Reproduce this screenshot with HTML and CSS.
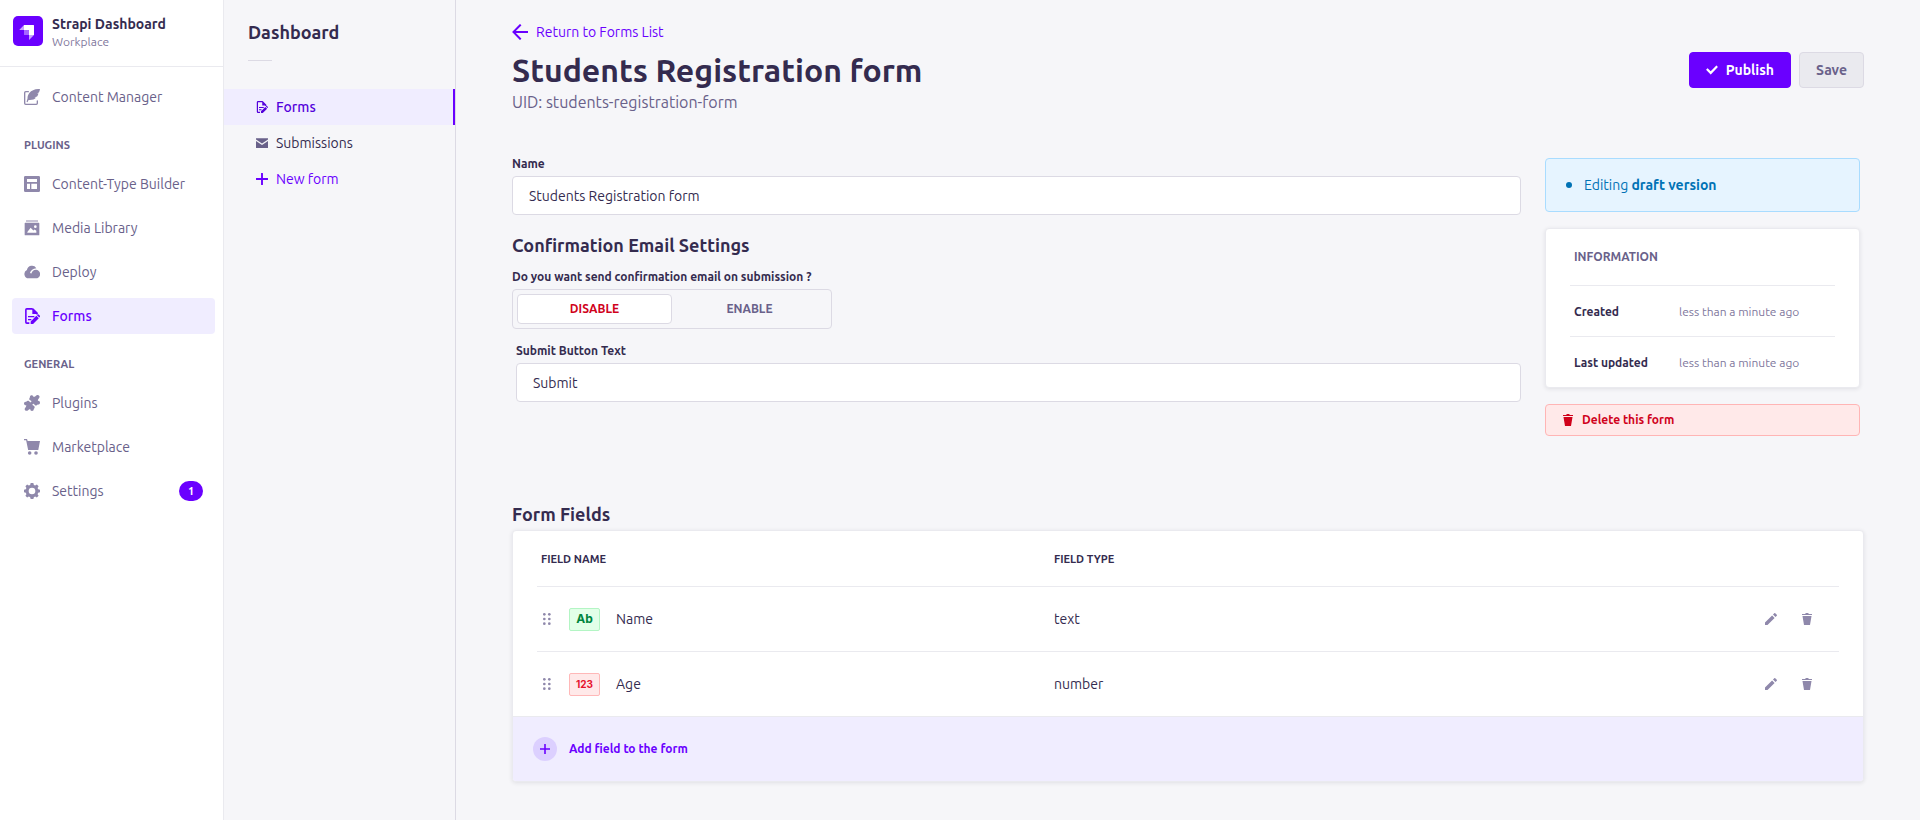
FILE: index.html
```html
<!DOCTYPE html>
<html lang="en">
<head>
<meta charset="utf-8">
<title>Students Registration form</title>
<link rel="stylesheet" href="styles.css">
</head>
<body>
<svg class="sprite" aria-hidden="true">
  <symbol id="trash" viewBox="0 0 24 24"><path d="M3.236 6.149a.2.2 0 00-.197.233L6 24h12l2.96-17.618a.2.2 0 00-.196-.233H3.236zM21.8 1.983c.11 0 .2.09.2.2v1.584a.2.2 0 01-.2.2H2.2a.2.2 0 01-.2-.2V2.183c0-.11.09-.2.2-.2h5.511c.9 0 1.631-1.09 1.631-1.983h5.316c0 .894.73 1.983 1.631 1.983H21.8z"/></symbol>
  <symbol id="pencil" viewBox="0 0 24 24"><path d="M23.604 3.514c.528.528.528 1.36 0 1.887l-2.622 2.607-4.99-4.99L18.6.396a1.322 1.322 0 011.887 0l3.118 3.118zM0 24v-4.99l14.2-14.2 4.99 4.99L4.99 24H0z"/></symbol>
  <symbol id="plus" viewBox="0 0 24 24"><path d="M24 13.604a.3.3 0 01-.3.3h-9.795V23.7a.3.3 0 01-.3.3h-3.21a.3.3 0 01-.3-.3v-9.795H.3a.3.3 0 01-.3-.3v-3.21a.3.3 0 01.3-.3h9.795V.3a.3.3 0 01.3-.3h3.21a.3.3 0 01.3.3v9.795H23.7a.3.3 0 01.3.3v3.21z"/></symbol>
  <symbol id="check" viewBox="0 0 24 24"><path d="M20.727 2.97a.2.2 0 01.286 0l2.85 2.89a.2.2 0 010 .28L9.554 20.854a.2.2 0 01-.285 0l-9.13-9.243a.2.2 0 010-.281l2.85-2.892a.2.2 0 01.284 0l6.14 6.209L20.726 2.97z"/></symbol>
  <symbol id="arrow-left" viewBox="0 0 24 24"><path d="M24 13.3a.2.2 0 01-.2.2H5.74l8.239 8.239a.2.2 0 010 .282L12.14 23.86a.2.2 0 01-.282 0L.14 12.14a.2.2 0 010-.282L11.86.14a.2.2 0 01.282 0L13.98 1.98a.2.2 0 010 .282L5.74 10.5H23.8c.11 0 .2.09.2.2v2.6z"/></symbol>
  <symbol id="form" viewBox="0 0 24 24">
    <path fill="none" stroke="currentColor" stroke-width="2.4" d="M13 1.300H4.200a1.400 1.400 0 00-1.400 1.400v18.600a1.400 1.400 0 001.400 1.400H8M13 1.300l6.500 6.500v2"/>
    <path d="M12.500 1v8h8L12.500 1zM6 12h9.500v2H6zM6 16.500h5v2H6zM10 24v-3.600l8.600-8.600 3.600 3.600L13.600 24zM19.500 10.900l1.100-1.100a.9.900 0 011.300 0l2 2a.9.900 0 010 1.300l-1 1.100z"/>
  </symbol>
  <symbol id="mail" viewBox="0 0 24 24"><path d="M0 2.500h24v2.600L12 13.200 0 5.100zM0 8l12 8.200L24 8v14H0z"/></symbol>
  <symbol id="drag" viewBox="0 0 24 36"><circle cx="4" cy="4" r="4"/><circle cx="19" cy="4" r="4"/><circle cx="4" cy="18" r="4"/><circle cx="19" cy="18" r="4"/><circle cx="4" cy="32" r="4"/><circle cx="19" cy="32" r="4"/></symbol>
</svg>

<div class="app">
  <nav class="sidebar" aria-label="Main">
    <div class="brand">
      <svg class="logo" viewBox="0 0 30 30"><rect width="30" height="30" rx="5" fill="#6a00ff"/><path fill="#fff" d="M11 9h9.500a.5.500 0 01.5.5V19h-5v-4.500a.5.500 0 00-.5-.5H11z"/><path fill="#a566ff" d="M11 14h4.500a.5.500 0 01.5.5V19h-4.500a.5.500 0 01-.5-.5z"/><path fill="#c9a3ff" d="M11 9v5H6.200zM16 19h5l-5 5z"/></svg>
      <div><div class="brand-name">Strapi Dashboard</div><div class="brand-sub">Workplace</div></div>
    </div>
    <div class="nav">
      <a class="nav-item" href="#"><svg class="i16" viewBox="0 0 24 24"><path fill="none" stroke="currentColor" stroke-width="2" stroke-linecap="round" d="M6.500 4H2.600A1.600 1.600 0 001 5.600v15.800A1.600 1.600 0 002.600 23h15.800a1.600 1.600 0 001.600-1.600V18"/><path d="M24 0c-7-.3-12.500 1.700-16 6-2 2.600-2.900 5.500-2.700 8.300l-1.500 4.900 1.500.6 1.500-3.300c4.800.4 8.700-.6 11.200-3.200l-2.300-.9 4-1.100c.9-1.300 1.600-2.800 2-4.400l-2.200-.5 2.900-1.300C23.200 3.600 23.700 1.800 24 0z"/></svg>Content Manager</a>
      <h2 class="nav-title">Plugins</h2>
      <a class="nav-item" href="#"><svg class="i16" viewBox="0 0 24 24"><path fill-rule="evenodd" d="M2 0h20a2 2 0 012 2v20a2 2 0 01-2 2H2a2 2 0 01-2-2V2a2 2 0 012-2zM4.500 4.500V9h15V4.500zM4.500 11.500v8H9v-8zM11 11.500v8h8.500v-8z"/></svg>Content-Type Builder</a>
      <a class="nav-item" href="#"><svg class="i16" viewBox="0 0 24 24"><path opacity=".5" d="M3.500 0h17a.5.500 0 01.5.5V3H3V.500a.5.500 0 01.5-.5z"/><path fill-rule="evenodd" d="M2 4h20a1 1 0 011 1v17a1 1 0 01-1 1H2a1 1 0 01-1-1V5a1 1 0 011-1zm3 15h13.500v-3l-2.500-1.800-2 1.500-4-4L5 18zM17 8a2 2 0 100 4 2 2 0 000-4z"/></svg>Media Library</a>
      <a class="nav-item" href="#"><svg class="i16" viewBox="0 0 24 24"><path d="M7 21.500a6.500 6.500 0 01-2.600-12.400A7.700 7.700 0 0118.500 6.200c-5 .1-8.600 3-9.600 7.400l2.200.5c.9-3.600 4-5.800 7.400-5.400a6.400 6.400 0 01-1.500 12.800z"/></svg>Deploy</a>
      <a class="nav-item active" href="#"><svg class="i16"><use href="#form"/></svg>Forms</a>
      <h2 class="nav-title">General</h2>
      <a class="nav-item" href="#"><svg class="i16" viewBox="0 0 24 24"><path d="M9 3.500c-.5-2 .8-3.300 2.500-3.300 1.800 0 2.500 1.300 2.700 2.600C16 3 17 1.500 18.500.600c1.500-.9 3.500-.6 4.500.8.700 1.300.3 2.500-.5 3.600-.9 1-1.600 1.800-1.700 3.800 1.500-.3 3.200.8 3.200 2.700 0 2-1.700 3.200-3.500 2.600-.8 1.500-2.700 2-4 1.200-1.100-.7-1.200-2-2.500-2.200-1.300 0-1.600 1.400-.8 2.300.8.800 2.300.7 2.700 2.200.4 1.300-.3 2.600-1.300 3.300.3 1.600-.8 3.100-2.600 3.100s-2.800-1.400-2.600-3c-1.600 0-2.300 1.600-3.700 2.400-1.400.7-3.400.5-4.300-.9-.8-1.300-.3-2.600.5-3.500.9-1 1.500-1.700 1.500-3.700C1.600 15.600 0 14.500 0 12.700c0-2 1.700-3.200 3.400-2.600.8-1.500 2.600-2.100 4-1.200 1.100.7 1.200 2 2.500 2.100 1.200 0 1.500-1.400.7-2.200-.8-.9-2.200-.9-2.600-2.200-.3-1.200.1-2.300 1-3.100z"/></svg>Plugins</a>
      <a class="nav-item" href="#"><svg class="i16" viewBox="0 0 24 24"><path d="M0 0h4.500l1 3H24l-2.600 13.500H6.200L3.200 2H0z"/><circle cx="8.500" cy="21" r="2.700"/><circle cx="18" cy="21" r="2.700"/></svg>Marketplace</a>
      <a class="nav-item" href="#"><svg class="i16" viewBox="0 0 24 24"><path fill-rule="evenodd" d="M10 0h4l.8 2.900 1.900.8 2.600-1.500 2.600 2.600-1.500 2.600.8 1.900L24 10v4l-2.800.8-.8 1.900 1.500 2.600-2.600 2.600-2.600-1.500-1.900.8L14 24h-4l-.8-2.800-1.900-.8-2.600 1.500-2.600-2.600 1.500-2.600-.8-1.900L0 14v-4l2.800-.7.8-1.900-1.500-2.600 2.600-2.600 2.600 1.500 1.900-.8zM12 7a5 5 0 100 10 5 5 0 000-10z"/></svg>Settings<span class="count">1</span></a>
    </div>
  </nav>

  <nav class="subnav" aria-label="Dashboard">
    <h2 class="subnav-title">Dashboard</h2>
    <div class="subnav-rule"></div>
    <a class="sub-item active" href="#"><svg class="i12"><use href="#form"/></svg>Forms</a>
    <a class="sub-item" href="#"><svg class="i12"><use href="#mail"/></svg>Submissions</a>
    <a class="sub-item new" href="#"><svg class="i12"><use href="#plus"/></svg>New form</a>
  </nav>

  <main class="main">
    <a class="back" href="#"><svg class="i16"><use href="#arrow-left"/></svg>Return to Forms List</a>
    <header class="head">
      <h1>Students Registration form</h1>
      <div class="actions">
        <button class="btn publish" type="button"><svg class="i12"><use href="#check"/></svg>Publish</button>
        <button class="btn save" type="button">Save</button>
      </div>
    </header>
    <p class="uid">UID: students-registration-form</p>

    <div class="columns">
      <form class="settings">
        <div class="field">
          <label for="name">Name</label>
          <input class="text" id="name" type="text" value="Students Registration form">
        </div>
        <h2 class="section">Confirmation Email Settings</h2>
        <div class="field" role="group" aria-labelledby="confirm">
          <span class="label" id="confirm">Do you want send confirmation email on submission ?</span>
          <div class="toggle">
            <button class="off" type="button" aria-pressed="true">DISABLE</button>
            <button class="on" type="button" aria-pressed="false">ENABLE</button>
          </div>
        </div>
        <div class="field inset">
          <label for="submit">Submit Button Text</label>
          <input class="text" id="submit" type="text" value="Submit">
        </div>
      </form>

      <aside class="side">
        <div class="draft"><span class="dot"></span><span>Editing <b>draft version</b></span></div>
        <section class="info">
          <h2>Information</h2>
          <dl>
            <div><dt>Created</dt><dd>less than a minute ago</dd></div>
            <div><dt>Last updated</dt><dd>less than a minute ago</dd></div>
          </dl>
        </section>
        <button class="delete" type="button"><svg class="i12"><use href="#trash"/></svg>Delete this form</button>
      </aside>
    </div>

    <h2 class="fields-title">Form Fields</h2>
    <section class="card">
      <div class="table-wrap">
        <table>
          <thead><tr><th class="c1">Field name</th><th>Field type</th><th class="c3"></th></tr></thead>
          <tbody>
            <tr>
              <td><div class="cell"><svg class="drag"><use href="#drag"/></svg><span class="badge ab">Ab</span>Name</div></td>
              <td>text</td>
              <td><div class="tools"><button type="button" aria-label="Edit Name"><svg class="i12"><use href="#pencil"/></svg></button><button type="button" aria-label="Delete Name"><svg class="i12"><use href="#trash"/></svg></button></div></td>
            </tr>
            <tr>
              <td><div class="cell"><svg class="drag"><use href="#drag"/></svg><span class="badge num">123</span>Age</div></td>
              <td>number</td>
              <td><div class="tools"><button type="button" aria-label="Edit Age"><svg class="i12"><use href="#pencil"/></svg></button><button type="button" aria-label="Delete Age"><svg class="i12"><use href="#trash"/></svg></button></div></td>
            </tr>
          </tbody>
        </table>
      </div>
      <button class="add" type="button"><span class="add-icon"><svg class="i10"><use href="#plus"/></svg></span>Add field to the form</button>
    </section>
  </main>
</div>
</body>
</html>
```
FILE: styles.css
```css
:root {
  --ink: #342b4f;
  --muted: #69618a;
  --soft: #8f88ab;
  --faint: #7f789d;
  --line: #eaeaef;
  --edge: #dcdae4;
  --primary: #6a00ff;
  --tint: #f0edff;
  --danger: #d0021b;
}
* { box-sizing: border-box; }
body {
  margin: 0;
  background: #f6f6f9;
  color: var(--ink);
  font: 14px/20px Ubuntu, "Noto Sans", sans-serif;
}
h1, h2, p, dl, dd { margin: 0; }
a { color: inherit; text-decoration: none; }
button { font: inherit; color: inherit; background: none; border: 0; padding: 0; cursor: pointer; }
svg { display: block; fill: currentColor; flex: none; }
.sprite { position: absolute; width: 0; height: 0; }
.i16 { width: 16px; height: 16px; }
.i12 { width: 12px; height: 12px; }
.i10 { width: 10px; height: 10px; }

.app { display: flex; min-height: 100vh; }

.sidebar { width: 224px; flex: none; background: #fff; border-right: 1px solid var(--line); }
.brand { display: flex; align-items: flex-start; gap: 9px; height: 67px; padding: 16px 13px 0; border-bottom: 1px solid var(--line); }
.logo { width: 30px; height: 30px; }
.brand-name { font-weight: 600; line-height: 16px; }
.brand-sub { font-size: 12px; line-height: 20px; color: var(--faint); }
.nav { display: flex; flex-direction: column; gap: 8px; padding: 12px 8px 12px 12px; }
.nav-item { display: flex; align-items: center; gap: 12px; height: 36px; padding: 0 12px; border-radius: 4px; color: var(--muted); }
.nav-item svg { color: var(--soft); }
.nav-item.active { color: var(--primary); background: var(--tint); font-weight: 500; }
.nav-item.active svg { color: var(--primary); }
.nav-title { height: 35px; padding: 13px 12px 0; font-size: 11px; line-height: 18px; font-weight: 600; text-transform: uppercase; color: var(--muted); }
.count { margin-left: auto; min-width: 24px; height: 20px; border-radius: 10px; background: var(--primary); color: #fff; font-size: 11px; font-weight: 600; text-align: center; }

.subnav { width: 232px; flex: none; border-right: 1px solid var(--edge); padding-top: 21px; }
.subnav-title { padding-left: 24px; font-size: 18px; line-height: 22px; font-weight: 600; }
.subnav-rule { width: 24px; height: 1px; margin: 17px 24px 28px; background: var(--edge); }
.sub-item { display: flex; align-items: center; gap: 8px; height: 36px; padding-left: 32px; }
.sub-item svg { color: var(--muted); }
.sub-item.active { background: var(--tint); color: #5300db; border-right: 2px solid var(--primary); font-weight: 500; }
.sub-item.active svg { color: #5300db; }
.sub-item.new, .sub-item.new svg { color: var(--primary); }

.main { flex: 1; min-width: 0; padding: 22px 56px 38px; }
.back { display: inline-flex; align-items: center; gap: 8px; color: var(--primary); vertical-align: top; }
.head { display: flex; align-items: center; justify-content: space-between; margin-top: 8px; }
h1 { font-size: 32px; line-height: 40px; font-weight: 600; }
.actions { display: flex; gap: 8px; }
.btn { display: flex; align-items: center; gap: 8px; height: 36px; padding: 0 16px; border: 1px solid; border-radius: 4px; font-weight: 600; }
.publish { background: var(--primary); border-color: var(--primary); color: #fff; }
.save { background: #eaeaef; border-color: var(--edge); color: var(--muted); }
.uid { font-size: 16px; line-height: 24px; color: var(--muted); }

.columns { display: grid; grid-template-columns: minmax(0, 1fr) 315px; gap: 24px; padding: 42px 4px 0 0; }
.settings { display: flex; flex-direction: column; gap: 14px; }
.field { display: flex; flex-direction: column; gap: 4px; }
.field.inset { padding-left: 4px; }
.field label, .label { font-size: 12px; line-height: 16px; font-weight: 600; }
.text { width: 100%; height: 39px; padding: 0 16px; border: 1px solid var(--edge); border-radius: 4px; background: #fff; color: var(--ink); font: inherit; }
.section { margin-top: 6px; font-size: 18px; line-height: 20px; font-weight: 600; }
.toggle { display: grid; grid-template-columns: 1fr 1fr; width: 320px; height: 40px; padding: 4px; border: 1px solid var(--edge); border-radius: 4px; font-size: 12px; font-weight: 600; }
.toggle button { border-radius: 4px; }
.toggle .off { border: 1px solid var(--edge); background: #fff; color: var(--danger); }
.toggle .on { color: var(--muted); }

.side { display: flex; flex-direction: column; gap: 16px; padding-top: 2px; }
.draft { display: flex; align-items: center; gap: 12px; height: 54px; padding: 0 20px; border: 1px solid #a9dcff; border-radius: 4px; background: #e6f4ff; color: #0072b5; }
.draft b { font-weight: 600; }
.dot { width: 6px; height: 6px; border-radius: 50%; background: #0072b5; }
.info { padding: 0 24px; border: 1px solid var(--line); border-radius: 4px; background: #fff; box-shadow: 0 1px 4px rgba(33, 33, 52, .1); }
.info h2 { padding: 18px 4px; font-size: 12px; line-height: 20px; font-weight: 600; text-transform: uppercase; color: var(--muted); }
.info dl > div { display: flex; align-items: center; height: 51px; padding: 2px 4px 0; border-top: 1px solid var(--line); font-size: 12px; }
.info dt { width: 105px; font-weight: 600; }
.info dd { color: var(--faint); }
.delete { display: flex; align-items: center; gap: 8px; height: 32px; padding: 0 16px; border: 1px solid #ffb5b5; border-radius: 4px; background: #ffe9e9; color: var(--danger); font-size: 12px; font-weight: 600; }

.fields-title { margin: 67px 0 5px; font-size: 18px; line-height: 22px; font-weight: 600; }
.card { border: 1px solid var(--line); border-radius: 4px; background: #fff; box-shadow: 0 1px 4px rgba(33, 33, 52, .1); overflow: hidden; }
.table-wrap { padding: 0 24px; }
table { width: 100%; border-spacing: 0; table-layout: fixed; }
th { height: 56px; padding: 0 4px; font-size: 11px; font-weight: 600; text-align: left; text-transform: uppercase; border-bottom: 1px solid var(--line); }
td { height: 65px; padding: 0 4px; border-bottom: 1px solid var(--line); }
tbody tr:last-child td { height: 64px; border-bottom: 0; }
.c1 { width: 513px; }
.c3 { width: 78px; }
.cell { display: flex; align-items: center; }
.drag { width: 8px; height: 12px; margin: 0 18px 0 2px; color: var(--soft); }
.badge { display: flex; align-items: center; justify-content: center; width: 31px; height: 23px; margin-right: 16px; border: 1px solid; border-radius: 2px; font-family: Inter, sans-serif; font-weight: 700; }
.ab { font-size: 12px; background: #e2ffe8; border-color: #b3f5c4; color: #00853d; }
.num { font-size: 10px; background: #ffe9e9; border-color: #ffb8b8; color: #e6142d; }
.tools { display: flex; gap: 24px; color: var(--soft); }
.add { display: flex; align-items: center; gap: 12px; width: 100%; height: 65px; padding: 0 20px; border-top: 1px solid var(--line); background: var(--tint); color: var(--primary); font-size: 12px; font-weight: 600; }
.add-icon { display: grid; place-items: center; width: 24px; height: 24px; border-radius: 50%; background: #dcd0ff; }
```
